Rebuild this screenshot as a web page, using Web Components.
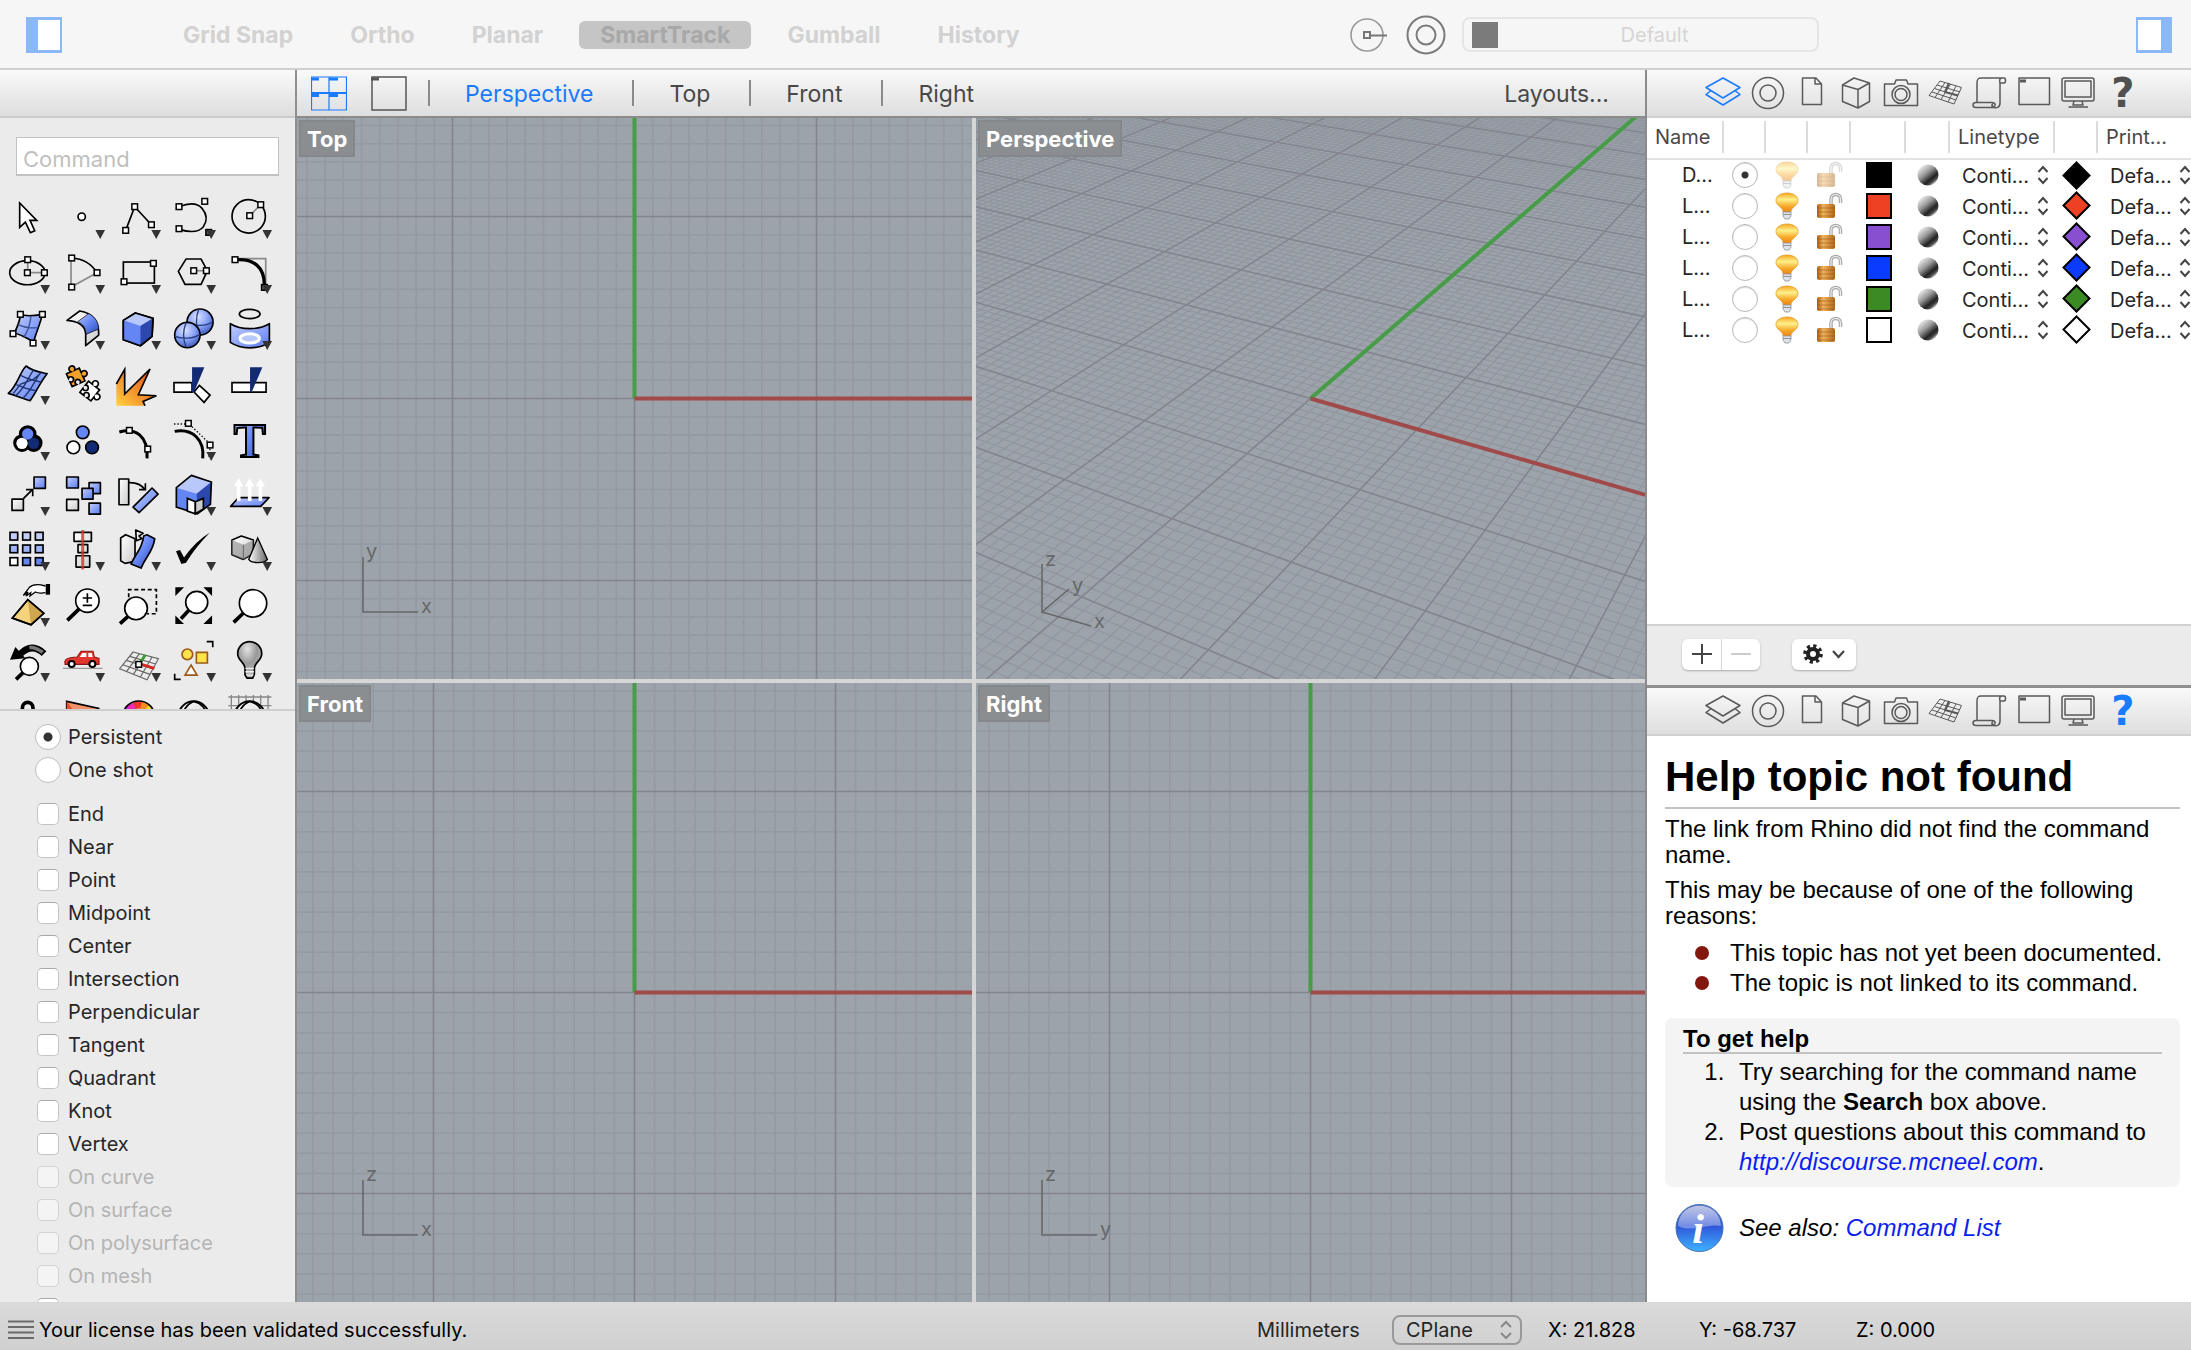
<!DOCTYPE html>
<html lang="en">
<head>
<meta charset="utf-8">
<title>Rhino</title>
<style>
  html, body { margin: 0; height: 100%; }
  body { font-family: Inter, "Liberation Sans", sans-serif; font-size: 20px; line-height: 24px; color: #262626; overflow: hidden; }
</style>
</head>
<body>
<app-shell>
  <mode-bar slot="top"></mode-bar>
  <side-bar slot="left">
    <tool-palette slot="tools"></tool-palette>
    <osnap-panel slot="snaps"></osnap-panel>
  </side-bar>
  <view-tabs slot="tabs"></view-tabs>
  <view-grid slot="views">
    <view-port label="Top" kind="ortho" unit="182" h="x" v="y"></view-port>
    <view-port label="Perspective" kind="perspective"></view-port>
    <view-port label="Front" kind="ortho" unit="201" h="x" v="z"></view-port>
    <view-port label="Right" kind="ortho" unit="201" h="y" v="z"></view-port>
  </view-grid>
  <panel-frame slot="right">
    <panel-tabs active="layers"></panel-tabs>
    <layers-panel></layers-panel>
    <panel-tabs active="help"></panel-tabs>
    <help-panel></help-panel>
  </panel-frame>
  <status-bar slot="bottom"></status-bar>
</app-shell>

<script>
const BASE = `<style>
  :host, *, *::before, *::after { box-sizing: border-box; }
  button { font: inherit; color: inherit; background: none; border: 0; padding: 0; margin: 0; }
  input, select { font: inherit; color: inherit; margin: 0; }
  svg { display: block; }
</style>`;
function define(name, render) {
  customElements.define(name, class extends HTMLElement {
    connectedCallback() {
      if (this.shadowRoot) return;
      this.attachShadow({ mode: 'open' }).innerHTML = BASE + render(this);
    }
  });
}

/* ---------- window frame ---------- */
define('app-shell', () => `<style>
  :host { display: grid; height: 100vh; grid-template-rows: 70px minmax(0, 1fr) 48px; background: #ebebeb; }
  .main { display: grid; grid-template-columns: 297px minmax(0, 1fr) 546px; min-height: 0; }
  .left { border-right: 2px solid #8f8f8f; min-height: 0; }
  .left, .right, .centre { display: flex; flex-direction: column; min-height: 0; }
  .right { border-left: 2px solid #8b8b8b; }
</style>
<slot name="top"></slot>
<div class="main">
  <div class="left"><slot name="left"></slot></div>
  <div class="centre"><slot name="tabs"></slot><slot name="views"></slot></div>
  <div class="right"><slot name="right"></slot></div>
</div>
<slot name="bottom"></slot>`);

define('mode-bar', () => `<style>
  :host { display: flex; align-items: center; background: #f6f6f6; border-bottom: 2px solid #cfcfcf; padding: 1px 19px 0 26px; }
  nav { display: flex; gap: 15px; margin-left: 100px; }
  nav button { font-size: 23px; line-height: 28px; font-weight: 700; color: #d2d2d2; padding: 0 21px; border-radius: 6px; }
  nav button.on { background: #c5c5c5; color: #a8a8a8; }
  .spacer { flex: 1; }
  .rings { display: flex; align-items: center; gap: 18px; }
  .layer { display: flex; align-items: center; width: 357px; height: 35px; border: 2px solid #e5e5e5; border-radius: 8px; margin: 0 317px 0 16px; padding: 0 8px; color: #d5d5d5; font-size: 20px; }
  .layer i { width: 26px; height: 26px; background: #7b7b7b; }
  .layer span { flex: 1; text-align: center; padding-left: 2px; }
</style>
<button aria-label="Left sidebar"><svg width="36" height="36"><path d="M1 1h34v34H1z" fill="#fff" stroke="#8bb8f9" stroke-width="2"/><path d="M0 0h12v36H0z" fill="#8bb8f9"/><path d="M0 1.500h36M0 34.500h36" stroke="#8bb8f9" stroke-width="3"/></svg></button>
<nav>${['Grid Snap','Ortho','Planar','SmartTrack','Gumball','History'].map(t => `<button${t === 'SmartTrack' ? ' class="on"' : ''}>${t}</button>`).join('')}</nav>
<span class="spacer"></span>
<span class="rings">
  <button aria-label="Record history"><svg width="38" height="38" fill="none"><circle cx="17" cy="19" r="16" stroke="#999" stroke-width="1.600"/><path d="M20 19.500h17M14 16h6v6h-6z" stroke="#777" stroke-width="2"/></svg></button>
  <button aria-label="Object properties"><svg width="40" height="40" fill="none" stroke="#7b7b7b" stroke-width="2"><circle cx="20" cy="20" r="18.500"/><circle cx="20" cy="20" r="9.500"/></svg></button>
</span>
<button class="layer"><i></i><span>Default</span></button>
<button aria-label="Right sidebar"><svg width="36" height="36"><path d="M1 1h34v34H1z" fill="#fff" stroke="#8bb8f9" stroke-width="2"/><path d="M25 0h11v36H25z" fill="#8bb8f9"/><path d="M0 1.500h36M0 34.500h36" stroke="#8bb8f9" stroke-width="3"/></svg></button>`);

define('side-bar', () => `<style>
  :host { display: flex; flex-direction: column; flex: 1; min-height: 0; }
  .head { flex: none; height: 48px; background: linear-gradient(#f9f9f9, #dedede); border-bottom: 2px solid #cbcbcb; }
  .cmd { flex: none; padding: 19px 16px 14px; }
  input { display: block; width: 100%; height: 39px; border: 1px solid #c2c2c2; border-bottom-width: 2px; background: #fff; padding: 5px 6px 0; font-size: 22px; outline: 0; }
  input::placeholder { color: #bfbfbf; opacity: 1; }
</style>
<div class="head"></div>
<div class="cmd"><input placeholder="Command" aria-label="Command"></div>
<slot name="tools"></slot><slot name="snaps"></slot>`);

/* ---------- tool palette: every icon is drawn on a 166 x 166 cell ---------- */
const sq = (x, y, dark) => `<rect x="${x-8.5}" y="${y-8.5}" width="17" height="17" fill="${dark ? '#555' : '#fff'}" stroke="#000" stroke-width="4.500"/>`;
const K = 'fill="none" stroke="#000" stroke-width="5"';
const B = 'fill="url(#b)" stroke="#000" stroke-width="5" stroke-linejoin="round"';
const W = 'fill="url(#w)" stroke="#000" stroke-width="5" stroke-linejoin="round"';
const G = 'fill="none" stroke="#8a8a8a" stroke-width="5"';
const glass = (x, y, r, hx, hy) => `<path d="M${x-r*.7} ${y+r*.7}L${hx} ${hy}" stroke="#000" stroke-width="11"/><circle cx="${x}" cy="${y}" r="${r}" fill="#fff" stroke="#000" stroke-width="5"/>`;
const globe = `<circle cx="83" cy="83" r="46" fill="url(#w)" stroke="#000" stroke-width="6"/><path d="M83 37c-30 14-40 40-38 90M83 37c24 6 38 20 42 60" ${K}/>`;
const piece = 'M-21-21H-6A9 9 0 1 1 6-21H21V-6A9 9 0 1 1 21 6V21H6A8 8 0 1 0-6 21H-21V6A8 8 0 1 0-21-6Z';
const TOOLS = [
  ['Select', '<path d="M59 39V112L76 96L91 128L104 122L90 91H110Z" fill="#fff" stroke="#000" stroke-width="5"/>', 1],
  ['Point', `<circle cx="80" cy="80" r="11" fill="#fff" stroke="#000" stroke-width="5"/>`],
  ['Polyline', `<path d="M44 121L71 50L121 104" ${K}/>` + sq(71,50)+sq(44,121)+sq(121,104)],
  ['Curve', `<path d="M39 50C70 38 95 40 108 55C124 74 124 92 112 110C98 128 66 126 39 118" ${K}/>` + sq(39,50)+sq(116,34)+sq(39,116)+sq(128,127,1)],
  ['Circle', `<circle cx="80" cy="79" r="50" ${K}/><path d="M83 77L116 44" ${G}/>` + sq(83,77)+sq(116,44)],
  ['Ellipse', `<ellipse cx="82" cy="83" rx="53" ry="36" ${K}/><path d="M83 44V83H133" ${G}/>` + sq(83,44)+sq(82,83)+sq(133,83)],
  ['Arc', `<path d="M48 39V126L126 83" ${G}/><path d="M50 39C85 41 110 58 126 83" ${K}/>` + sq(50,39)+sq(50,126)+sq(126,83)],
  ['Rectangle', `<rect x="37" y="51" width="93" height="63" ${K}/>` + sq(127,55)+sq(39,110)],
  ['Polygon', `<path d="M37 79L60 42H105L124 77L105 118H57Z" ${K}/><path d="M83 77H121" ${G}/>` + sq(83,77)+sq(121,77)],
  ['Fillet', `<path d="M39 41H131V127" ${G}/><path d="M46 44C95 42 127 66 127 120" fill="none" stroke="#000" stroke-width="10"/>` + sq(39,44)+sq(127,127,1)],
  ['Surface', `<path d="M61 40C80 48 105 44 127 40C120 70 106 100 101 122C80 112 66 102 43 96C52 78 60 60 61 40Z" ${B}/><path d="M93 45C90 70 84 90 72 108M54 70C72 80 92 82 114 80" stroke="#35508f" stroke-width="4" fill="none"/>` + sq(61,40)+sq(127,40)+sq(39,98)+sq(99,126)],
  ['Loft', `<path d="M36 58L74 30C112 36 132 58 131 102L92 134V98C90 74 68 60 36 58Z" ${W}/><path d="M68 62L101 38C122 48 131 66 131 84L93 100C92 80 84 68 68 62Z" fill="url(#d)" stroke="#000" stroke-width="2"/>`],
  ['Box', `<path d="M73 36L126 52L123 106L88 134L37 116V58Z" ${B}/><path d="M73 36L126 52L88 75L37 58Z" fill="#b9c8fa"/><path d="M37 58L88 75V134L37 116Z" fill="#6485f4"/><path d="M88 75L126 52L123 106L88 134Z" fill="#2c48ae"/><path d="M73 36L126 52L123 106L88 134L37 116V58Z" ${K}/>`],
  ['Boolean', `<circle cx="102" cy="63" r="39" fill="url(#s)" stroke="#000" stroke-width="5"/><path d="M64 68C85 76 120 76 140 62M98 25C88 50 90 80 98 100" fill="none" stroke="#27407f" stroke-width="4"/><circle cx="64" cy="102" r="38" fill="url(#s)" stroke="#000" stroke-width="5"/><path d="M27 106C48 114 82 114 101 100M60 65C50 90 52 118 60 138" fill="none" stroke="#27407f" stroke-width="4"/>`],
  ['Project', `<ellipse cx="83" cy="39" rx="31" ry="14" ${K}/><path d="M25 68C58 88 108 88 142 68V124C108 146 58 146 25 124Z" ${B}/><ellipse cx="83" cy="112" rx="29" ry="14" fill="#b9c8fa" stroke="#fff" stroke-width="9"/>`],
  ['Mesh', `<path d="M78 30C98 46 118 48 141 53C118 82 108 110 90 134C66 126 50 120 25 112C54 86 56 54 78 30Z" ${B}/><path d="M100 42C78 76 72 100 46 119M121 50C98 84 92 106 68 127M62 58C84 70 102 74 124 78M49 86C70 96 86 100 107 104M40 112L62 84L100 70L122 52" stroke="#1e3370" stroke-width="4" fill="none"/>`],
  ['Group', `<g stroke="#000" stroke-width="5"><path d="${piece}" fill="#f4a12c" transform="translate(62 64) rotate(-24)"/><path d="${piece}" fill="#fff" transform="translate(104 105) rotate(38)"/></g>`, 1],
  ['Explode', `<path d="M16 149V84L41 40V114L117 39L82 116L136 119L96 136L102 149Z" fill="url(#e)"/><path d="M16 84L41 40V114L117 39L82 116L136 119L96 136L102 149" ${K}/>`, 1],
  ['Trim', `<path d="M24 80H78V108H24Z" fill="#fff" stroke="#000" stroke-width="5"/><path d="M100 88L132 117L114 139L84 108Z" fill="#fff" stroke="#000" stroke-width="5"/><path d="M78 34H115L84 108H78Z" fill="#132b74"/>`, 1],
  ['Split', `<path d="M30 80H132V108H30Z" fill="#fff" stroke="#000" stroke-width="5"/><path d="M84 34H121L89 108H84Z" fill="#132b74"/>`, 1],
  ['Join', `<g stroke="#000" stroke-width="19"><circle cx="83" cy="66" r="17"/><circle cx="66" cy="93" r="17"/><circle cx="101" cy="93" r="17"/></g><circle cx="66" cy="94" r="17" fill="#fff"/><circle cx="101" cy="94" r="17" fill="#132b74"/><circle cx="83" cy="66" r="17" fill="#6485f4"/>`],
  ['Ungroup', `<g stroke="#000" stroke-width="5"><circle cx="83" cy="61" r="19" fill="#6485f4"/><circle cx="55" cy="106" r="19" fill="#fff"/><circle cx="111" cy="106" r="19" fill="#132b74"/></g>`, 1],
  ['Edit points', `<path d="M25 60C72 46 112 70 108 139" fill="none" stroke="#000" stroke-width="9"/>` + sq(55,55)+sq(110,111), 1],
  ['Control points', `<path d="M26 58C80 48 116 84 110 139" fill="none" stroke="#000" stroke-width="9"/><path d="M24 36H60M78 44L128 92M132 110L128 136" fill="none" stroke="#000" stroke-width="4" stroke-dasharray="4 6"/>` + sq(67,34)+sq(132,99)],
  ['Text', `<text x="83" y="134" text-anchor="middle" font-family="Liberation Serif, serif" font-weight="700" font-size="144" fill="url(#d)" stroke="#000" stroke-width="6">T</text>`, 1],
  ['Move', `<path d="M36 96H70V130H36Z" ${W}/><path d="M102 30H136V64H102Z" ${B}/><path d="M70 95L97 68M78 68H98V88" ${K}/>`],
  ['Copy', `<path d="M35 30H70V63H35Z" ${B}/><path d="M102 47H136V80H102Z" ${B}/><path d="M81 64H114V96H81Z" ${B}/><path d="M35 97H70V130H35Z" ${W}/><path d="M102 108H136V141H102Z" ${B}/>`, 1],
  ['Rotate', `<path d="M24 36H53V113H24Z" ${W}/><path d="M123 63L141 81L84 137L66 120Z" ${B}/><path d="M54 47C78 46 92 54 102 68M84 68H103V49" ${K}/>`, 1],
  ['Solid edit', `<path d="M76 25L136 45L133 112L94 140L31 120V62Z" fill="#6485f4"/><path d="M76 25L136 45L92 80L31 62Z" fill="#b9c8fa"/><path d="M92 80L136 45L133 112L94 140Z" fill="#2c48ae"/><path d="M76 25L136 45L133 112L94 140L31 120V62Z" ${K}/><path d="M64 94L88 104V140L64 132Z" fill="#fff" stroke="#000" stroke-width="5"/><path d="M88 104L112 94V126L88 140Z" fill="#ccc" stroke="#000" stroke-width="5"/>`],
  ['Extrude', `<path d="M49 92H141L116 118H26Z" ${B}/><path d="M50 102V50M83 102V50M115 102V50" stroke="#fff" stroke-width="11"/><path d="M36 58L50 34L64 58ZM69 58L83 34L97 58ZM101 58L115 34L129 58Z" fill="#fff"/>`],
  ['Array', [0,1,2].map(r => [0,1,2].map(c => `<rect x="${30+38*c}" y="${31+38*r}" width="23" height="23" fill="${r===2&&c===0?'#fff':['#c3cffb','#9fb3f8','#6485f4'][r]}" stroke="#000" stroke-width="5"/>`).join('')).join('')],
  ['Align', `<path d="M57 31H109V58H57ZM69 68H98V92H69ZM63 101H104V135H63Z" ${W}/><path d="M83 24V142" stroke="#d1352b" stroke-opacity=".8" stroke-width="9"/>`],
  ['Flow', `<path d="M74 24L96 34L84 42L92 50L76 56Z" ${W}/><path d="M29 48L44 38L72 50V118L42 124L29 116Z" ${W}/><path d="M98 42L108 38L131 50C126 90 106 100 90 138L60 126C76 90 92 84 98 42Z" fill="url(#d)" stroke="#000" stroke-width="5" stroke-linejoin="round"/>`],
  ['Check', '<path d="M30 88L42 84L54 106Q90 56 131 32Q86 78 60 122L46 126Z" fill="#000"/>'],
  ['Mesh solids', `<path d="M58 42L94 54L92 96L64 112L30 98V54Z" ${W}/><path d="M30 54L64 68L94 54L92 96L64 112L30 98Z" fill="#888" fill-opacity=".6"/><path d="M64 68V110" stroke="#666" stroke-width="3"/><path d="M107 48L136 112A29 13 0 0 1 80 112Z" fill="url(#c)" stroke="#000" stroke-width="4"/>`],
  ['Pick', `<path d="M83 65L37 120L93 140L131 106Z" fill="#f5d27c" stroke="#000" stroke-width="5"/><path d="M83 65L131 106L93 140Z" fill="#cfa64e"/><path d="M83 65L37 120L93 140L131 106Z" ${K}/><path d="M136 24C116 18 98 18 88 28L70 52L84 42L78 54L92 44L90 54L106 42C118 48 128 44 136 44" fill="#fff" stroke="#000" stroke-width="4"/><path d="M137 18H150V50H137Z" fill="#000"/>`],
  ['Zoom', glass(97,68,35,37,127) + `<path d="M97 46V74M83 60H111M83 82H111" ${K}/>`, 1],
  ['Zoom window', `<path d="M53 58V35H136V107H108" ${K} stroke-dasharray="12 8"/>` + glass(75,91,34,27,137), 1],
  ['Zoom extents', glass(92,73,33,45,122) + '<path d="M28 28H54L28 54ZM138 28V54L112 28ZM28 138V112L54 138ZM138 138H112L138 112Z" fill="#000"/>', 1],
  ['Zoom selected', glass(93,76,41,35,133), 1],
  ['Undo view', glass(88,100,27,48,139) + `<path d="M132 62C108 38 84 40 62 62" fill="none" stroke="#000" stroke-width="20"/><path d="M128 58C108 44 98 42 88 44" fill="none" stroke="#777" stroke-width="11"/><path d="M30 80L46 42L76 76Z" fill="#000"/>`],
  ['Car', `<path d="M24 106H142" stroke="#999" stroke-width="4"/><path d="M30 92C26 76 40 74 66 72L78 55H114L118 72L132 76V94H30Z" fill="#e2362f" stroke="#8b1712" stroke-width="3"/><path d="M82 60H94V72H74ZM100 60H110L113 72H100Z" fill="#fff"/><circle cx="50" cy="93" r="9" fill="#fff" stroke="#000" stroke-width="6"/><circle cx="112" cy="93" r="9" fill="#fff" stroke="#000" stroke-width="6"/>`],
  ['CPlane', `<path d="M66 57L142 77L108 140L26 107ZM85 62L47 115M104 67L67 124M123 72L88 132M56 70L134 93M46 82L126 108M36 95L117 124" fill="none" stroke="#666" stroke-width="3.500"/><path d="M86 92L102 66" stroke="#2fa32b" stroke-width="8"/><path d="M86 92L130 106" stroke="#d8241d" stroke-width="8"/>` + sq(83,94)],
  ['Selection', `<g stroke="#9c5a17" stroke-width="5"><circle cx="64" cy="64" r="16" fill="#ffe34d"/><path d="M91 58H124V90H91Z" fill="#ffe34d"/><path d="M75 96L93 126H57Z" fill="#fff"/></g><path d="M122 26H140V43M26 122V139H44" ${K}/>`],
  ['Hide', `<path d="M69 104C66 86 47 82 47 62A36 36 0 0 1 119 62C119 82 100 86 97 104V124L92 135H75L69 126Z" fill="url(#g)" stroke="#000" stroke-width="5"/><path d="M70 106H96M70 116H96M73 126H94" stroke="#eee" stroke-width="4"/>`],
  ['Lock', '<path d="M67 90V58C67 34 99 34 99 58V90" fill="none" stroke="#000" stroke-width="11"/>', 1],
  ['Layer', '<path d="M35 37L131 58V120H35Z" fill="#f2916a" stroke="#000" stroke-width="5"/><path d="M35 37L60 70H35Z" fill="#e5532a"/>', 1],
  ['Render colour', '<g fill="none" stroke-width="22"><path d="M47 80A36 36 0 0 1 58 58" stroke="#b52bea"/><path d="M56 60A36 36 0 0 1 72 49" stroke="#ee2bb8"/><path d="M70 50A36 36 0 0 1 92 49" stroke="#f0352c"/><path d="M90 48A36 36 0 0 1 108 60" stroke="#f58a20"/><path d="M106 58A36 36 0 0 1 119 82" stroke="#f7e02a"/></g><circle cx="83" cy="84" r="48" fill="none" stroke="#000" stroke-width="5"/>', 1],
  ['Shade', globe, 1],
  ['Wireframe', `<path d="M19 24H148M19 50H148M28 18V70M50 18V70M72 18V70M94 18V70M116 18V70M138 18V70" stroke="#888" stroke-width="4"/>` + globe, 1],
];
define('tool-palette', () => `<style>
  :host { display: block; flex: none; height: 521px; overflow: hidden; border-bottom: 2px solid #cfcfcf; }
  .grid { display: grid; width: 277px; grid-template-columns: repeat(5, 1fr); }
  button { aspect-ratio: 1; }
  .grid svg { width: 100%; height: 100%; overflow: visible; }
  .defs { position: absolute; width: 0; height: 0; }
</style>
<svg class="defs" aria-hidden="true"><defs>
  <linearGradient id="b" x2="1" y2="1"><stop offset="0" stop-color="#c3cffb"/><stop offset="1" stop-color="#5a7cf2"/></linearGradient>
  <linearGradient id="w" x2="1" y2="1"><stop offset="0" stop-color="#fff"/><stop offset="1" stop-color="#ccc"/></linearGradient>
  <linearGradient id="d" x2="1" y2="1"><stop offset="0" stop-color="#b9c8fa"/><stop offset=".5" stop-color="#6485f4"/><stop offset="1" stop-color="#2c48ae"/></linearGradient>
  <linearGradient id="e" x1="0" y1="1" x2="1" y2="0"><stop offset="0" stop-color="#ffd23c"/><stop offset="1" stop-color="#e2401b"/></linearGradient>
  <linearGradient id="c"><stop offset="0" stop-color="#fff"/><stop offset="1" stop-color="#666"/></linearGradient>
  <radialGradient id="s" cx=".4" cy=".3" r=".8"><stop offset="0" stop-color="#dbe3fd"/><stop offset=".5" stop-color="#89a2f7"/><stop offset="1" stop-color="#2c48ae"/></radialGradient>
  <radialGradient id="g" cx=".4" cy=".2" r=".8"><stop offset="0" stop-color="#e4e4e4"/><stop offset=".5" stop-color="#999"/><stop offset="1" stop-color="#bbb"/></radialGradient>
</defs></svg>
<div class="grid">${TOOLS.map(([n, art, plain]) => `<button aria-label="${n}"><svg viewBox="0 0 166 166">${art}${plain ? '' : '<path d="M121 120H150L135.500 147Z" fill="#333"/>'}</svg></button>`).join('')}</div>`);

/* ---------- object snaps ---------- */
define('osnap-panel', () => {
  const snaps = ['End','Near','Point','Midpoint','Center','Intersection','Perpendicular','Tangent','Quadrant','Knot','Vertex'];
  const off = ['On curve','On surface','On polysurface','On mesh'];
  return `<style>
  :host { display: block; flex: 1; min-height: 0; overflow: hidden; padding: 9px 0 0 35px; }
  fieldset { border: 0; margin: 0 0 11px; padding: 0; }
  label { display: flex; align-items: center; height: 33px; gap: 7px; }
  input { appearance: none; flex: none; background: #fff; }
  input[type=radio] { width: 26px; height: 26px; border-radius: 50%; border: 1px solid #bdbdbd; }
  input[type=radio]:checked { background: radial-gradient(circle, #333 0 4px, #fff 5px); }
  input[type=checkbox] { width: 22px; height: 22px; margin: 0 2px; border-radius: 5px; border: 1px solid #c4c4c4; border-top-color: #aaa; }
  input:disabled { background: #f4f4f4; border-color: #d2d2d2; }
  .off { color: #b4b4b4; }
</style>
<fieldset>
<label><input type="radio" name="mode" checked>Persistent</label>
<label><input type="radio" name="mode">One shot</label>
</fieldset>
${snaps.map(s => `<label><input type="checkbox">${s}</label>`).join('')}
${off.map(s => `<label class="off"><input type="checkbox" disabled>${s}</label>`).join('')}
<label><input type="checkbox" aria-label="More snaps"></label>`;
});

/* ---------- viewport tabs ---------- */
define('view-tabs', () => `<style>
  :host { display: flex; flex: none; align-items: center; height: 48px; background: linear-gradient(#f9f9f9, #dedede); border-bottom: 2px solid #8b8b8b; padding-left: 14px; font-size: 23px; color: #484848; }
  .icons { display: flex; gap: 24px; margin-right: 21px; }
  .tab, .more { height: 26px; line-height: 28px; }
  .tab { border-left: 2px solid #8a8a8a; padding: 0 39px 0 35px; }
  .on { color: #1a7bff; }
  .more { margin-left: auto; padding-right: 36px; }
</style>
<span class="icons">
  <button aria-label="Four views"><svg width="36" height="35" fill="none" stroke="#1a7bff"><path d="M.5 1H35.500V34H.5ZM18 1V34" stroke-width="1.200"/><path d="M0 17H36" stroke-width="2"/><path d="M0 3H8M18 3H27M0 19.500H8M18 19.500H27" stroke-width="3"/></svg></button>
  <button aria-label="One view"><svg width="36" height="35" fill="none" stroke="#555"><path d="M1 1H35V34H1Z" stroke-width="1.500"/><path d="M0 3H8" stroke-width="3"/></svg></button>
</span>
<button class="tab on">Perspective</button><button class="tab">Top</button><button class="tab">Front</button><button class="tab">Right</button>
<button class="more">Layouts...</button>`);

define('view-grid', () => `<style>
  :host { display: grid; flex: 1; min-height: 0; gap: 4px; background: #d6d6d6; grid-template-columns: minmax(0, 675fr) minmax(0, 669fr); grid-template-rows: minmax(0, 561fr) minmax(0, 619fr); }
</style><slot></slot>`);

/* ---------- construction planes ---------- */
function orthoGrid(unit) {
  let minor = '', major = '';
  for (let i = -40; i <= 40; i++) {
    const p = i * unit / 10;
    const d = `M${p.toFixed(1)} -900V900M-900 ${p.toFixed(1)}H900`;
    if (i % 10) minor += d; else major += d;
  }
  return `<path d="${minor}" class="minor"/><path d="${major}" class="major"/><path d="M0 0V-900" class="gy"/><path d="M0 0H900" class="gx"/>`;
}
function perspectiveGrid() {
  const a = 101.93, b = 58.61, c = 29.33, d = -50.76, g = -0.04537, h = 0.0774;
  const pt = (u, v) => { const w = 1 + g*u + h*v; return `${((a*u + b*v)/w).toFixed(1)} ${((c*u + d*v)/w).toFixed(1)}`; };
  let minor = '', major = '';
  const add = (i, s) => { if (i % 10) minor += s; else major += s; };
  for (let i = -140; i <= 90; i++) {
    const u = i / 10, v0 = Math.max(-12, (0.2 - 1 - g*u) / h);
    add(i, `M${pt(u, v0)}L${pt(u, 30)}`);
  }
  for (let i = -70; i <= 140; i++) {
    const v = i / 10, u1 = Math.min(14, (0.2 - 1 - h*v) / g);
    add(i, `M${pt(-30, v)}L${pt(u1, v)}`);
  }
  return `<path d="${minor}" class="minor fine"/><path d="${major}" class="major"/><path d="M0 0L${pt(0, 14)}" class="gy"/><path d="M0 0L${pt(8, 0)}" class="gx"/>`;
}
define('view-port', el => {
  const persp = el.getAttribute('kind') === 'perspective';
  const axes = persp
    ? `<path d="M66 -115V-67L93 -90M66 -67L115 -53"/><text x="69" y="-113">z</text><text x="96" y="-87">y</text><text x="118" y="-51">x</text>`
    : `<path d="M66 -122V-67H121"/><text x="69" y="-121">${el.getAttribute('v')}</text><text x="124" y="-66">${el.getAttribute('h')}</text>`;
  return `<style>
  :host { display: grid; background: #9da3ab; overflow: hidden; }
  svg, .label { grid-area: 1 / 1; }
  svg { width: 100%; height: 100%; min-height: 0; }
  path { fill: none; }
  .minor { stroke: #949aa1; stroke-width: 1.600; }
  .fine { stroke-width: 1.200; stroke: #90969e; }
  .major { stroke: #82858e; stroke-width: 1.600; }
  .gx { stroke: #a04a4a; stroke-width: 4; }
  .gy { stroke: #479c47; stroke-width: 4; }
  .axes path { stroke: #666869; stroke-width: 1.600; }
  .axes text { fill: #66686a; font-size: 20px; }
  .label { justify-self: start; align-self: start; z-index: 1; margin: 2px; height: 37px; line-height: 33px; padding: 1px 6px 0; border: 2px solid #85888a; background: #8b8e91; color: #fff; font-weight: 700; font-size: 22px; }
</style>
<svg><svg x="50%" y="50%" overflow="visible">${persp ? perspectiveGrid() : orthoGrid(+el.getAttribute('unit'))}</svg><svg y="100%" overflow="visible" class="axes">${axes}</svg></svg>
<button class="label">${el.getAttribute('label')}</button>`;
});

/* ---------- right-hand panels ---------- */
define('panel-frame', () => `<style>
  :host { display: flex; flex-direction: column; flex: 1; min-height: 0; background: #fff; }
</style><slot></slot>`);

const PANELS = {
  layers: '<path d="M22 8L39 17.500L22 28L5 17.500ZM9.500 21L5 24.500L22 35L39 24.500L34.500 21"/>',
  properties: '<circle cx="22" cy="23" r="15.500"/><circle cx="22" cy="23" r="8"/>',
  page: '<path d="M12.500 8H26L31.500 14V34.500H12.500ZM25 8V14H31.500"/>',
  box: '<path d="M20 8L35.500 13V31.500L24 38L8.500 31.500V15ZM8.500 15L24 19.500L35.500 13M24 19.500V38"/>',
  camera: '<path d="M5.500 14H15.500L17 10H27.500L29 14H38.500V35.500H5.500Z"/><circle cx="22" cy="24.500" r="9"/><circle cx="22" cy="24.500" r="6"/>',
  cplane: '<path stroke-width="1" d="M17 11L38.500 17.500L31 34L6 25.500ZM22 12.500L12 27.500M27.500 14L18 29.500M33 16L25 32M14 15L37 22M11.500 18.500L35 26M9 22L33 30"/><path d="M26 13L22 22L35 25.500" stroke-width="2"/>',
  notes: '<path d="M9 32V13C9 9 10 8 13 8H36C38 8 38 13 36 13H32V33C32 38 28 38 26 37.500H8C4 37.500 4 32.500 8 32.500H24C28 32.500 28 37 25 36.500C23 36 24 34 25 34M32 13C31 10 32 8 34 8"/>',
  display: '<path d="M7 8H37.500V34.500H7Z"/><path d="M8 11H14" stroke-width="3"/>',
  monitor: '<rect x="6" y="8" width="32" height="23" rx="2"/><path d="M9 11H35V27H9ZM18 31L17 35H27L26 31M12.500 37H32"/>',
};
define('panel-tabs', el => {
  const on = el.getAttribute('active');
  return `<style>
  :host { display: flex; flex: none; height: 48px; background: linear-gradient(#f9f9f9, #dedede); border-bottom: 2px solid #d0d0d0; padding: 0 46px 0 54px; }
  button { flex: 1; min-width: 0; color: #5a5a5a; }
  .on { color: #1a7bff; }
  svg { margin: 0 auto; fill: none; stroke: currentColor; stroke-width: 1.500; stroke-linejoin: round; }
  .q { font-family: "DejaVu Sans", sans-serif; font-weight: 700; font-size: 40px; line-height: 46px; color: #505050; }
  .q.on { color: #1a7bff; }
</style>${Object.entries(PANELS).map(([n, a]) => `<button aria-label="${n}"${n === on ? ' class="on"' : ''}><svg width="44" height="46" viewBox="0 0 44 46">${a}</svg></button>`).join('')}<button class="q${on === 'help' ? ' on' : ''}">?</button>`;
});

define('layers-panel', () => {
  const rows = [['D...','#000'],['L...','#ee4023'],['L...','#8850d0'],['L...','#0a3cff'],['L...','#3c8a24'],['L...','#fff']];
  return `<style>
  :host { display: flex; flex-direction: column; flex: none; height: 570px; border-bottom: 3px solid #8f8f8f; }
  .list { flex: 1; }
  table { table-layout: fixed; width: 100%; border-collapse: collapse; }
  th { height: 41px; font-weight: 400; text-align: left; padding: 0 8px 2px; color: #484848; white-space: nowrap; border-bottom: 2px solid #e2e2e2; background: linear-gradient(#dcdcdc, #dcdcdc) right 3px/2px 32px no-repeat; }
  th:last-child { background: none; }
  td { height: 31px; padding: 0; text-align: center; overflow: hidden; }
  td svg { margin: 0 auto; }
  .name { text-align: left; padding-left: 35px; }
  input { appearance: none; display: block; width: 26px; height: 26px; margin: 0 auto; border: 1px solid #b8b8b8; border-radius: 50%; box-shadow: inset 0 1px 1px #ddd; }
  input:checked { background: radial-gradient(circle, #333 0 3px, #fff 4px); }
  select { appearance: none; display: block; width: 100%; border: 0; outline: 0; padding: 2px 0 0 12px; height: 28px; background: url("data:image/svg+xml,%3Csvg xmlns='http://www.w3.org/2000/svg' width='12' height='20' fill='none' stroke='%23444' stroke-width='2'%3E%3Cpath d='M1.500 7L6 2L10.500 7M1.500 13L6 18L10.500 13'/%3E%3C/svg%3E") right 6px center no-repeat; }
  .last select { background-position: right 0 center; }
  .swatch { display: block; width: 26px; height: 26px; border: 2px solid #000; margin: 0 auto; }
  .dim { opacity: .45; }
  footer { display: flex; align-items: center; gap: 32px; height: 61px; background: #ebebeb; border-top: 2px solid #d2d2d2; padding: 0 35px 3px; }
  .grp { display: flex; height: 31px; background: #fff; border-radius: 6px; box-shadow: 0 1px 2px #aaa; }
  .grp button { width: 39px; display: grid; place-items: center; }
  .grp button + button { border-left: 1px solid #d8d8d8; }
  .grp .gear { width: 64px; }
</style>
<svg width="0" height="0" style="position:absolute" aria-hidden="true"><defs>
  <linearGradient id="bulb" x2="0" y2="1"><stop offset="0" stop-color="#f6a820"/><stop offset=".35" stop-color="#fdf08a"/><stop offset=".7" stop-color="#f8a929"/><stop offset="1" stop-color="#e98316"/></linearGradient>
  <linearGradient id="lock"><stop offset="0" stop-color="#a65f18"/><stop offset=".35" stop-color="#f0b25c"/><stop offset="1" stop-color="#b0661a"/></linearGradient>
  <linearGradient id="ball" x1=".1" y1=".1" x2=".8" y2=".95"><stop offset="0" stop-color="#f4f4f4"/><stop offset=".4" stop-color="#999"/><stop offset=".72" stop-color="#222"/><stop offset=".85" stop-color="#444"/><stop offset="1" stop-color="#eee"/></linearGradient>
</defs></svg>
<div class="list"><table>
<colgroup>${[77,42,42,43,55,44,105,43,93].map(w => `<col style="width:${w}px">`).join('')}</colgroup>
<thead><tr><th>Name</th><th></th><th></th><th></th><th></th><th></th><th>Linetype</th><th></th><th>Print...</th></tr></thead>
<tbody>${rows.map(([n, c], i) => `<tr>
<td class="name">${n}</td>
<td><input type="radio" name="current" aria-label="Current layer"${i ? '' : ' checked'}></td>
<td><svg width="24" height="28"${i ? '' : ' class="dim"'}><path d="M8 20C8 15 1 14 1 8.500C1 -1.500 23 -1.500 23 8.500C23 14 16 15 16 20Z" fill="url(#bulb)" stroke="#e59a2a" stroke-width=".8"/><path d="M8 20H16V24L14 27H10L8 24Z" fill="#dfe3e8" stroke="#8c939b" stroke-width=".8"/><path d="M8 22.500H16" stroke="#8c939b"/></svg></td>
<td><svg width="27" height="28"${i ? '' : ' class="dim"'}><path d="M15 13V7C15 1 24.500 1 24.500 7V11" fill="none" stroke="#a9a9a9" stroke-width="3.500"/><path d="M15 13V7C15 1 24.500 1 24.500 7V11" fill="none" stroke="#eee" stroke-width="1.200"/><rect x="1" y="12" width="18" height="14" rx="2" fill="url(#lock)"/><path d="M1 16H19M1 20H19M1 24H19" stroke="#8f4f10" stroke-opacity=".5"/></svg></td>
<td><i class="swatch" style="background:${c}"></i></td>
<td><svg width="22" height="22"><circle cx="11" cy="11" r="10.500" fill="url(#ball)"/></svg></td>
<td><select aria-label="Linetype"><option>Conti...</option></select></td>
<td><svg width="29" height="29"><path d="M14.500 1.500L27.500 14.500L14.500 27.500L1.500 14.500Z" fill="${c}" stroke="#000" stroke-width="2"/></svg></td>
<td class="last"><select aria-label="Print width"><option>Defa...</option></select></td>
</tr>`).join('')}</tbody></table></div>
<footer>
  <span class="grp"><button aria-label="Add layer"><svg width="22" height="22"><path d="M11 1V21M1 11H21" stroke="#444" stroke-width="2"/></svg></button><button aria-label="Remove layer"><svg width="22" height="22"><path d="M1 11H21" stroke="#ccc" stroke-width="2"/></svg></button></span>
  <span class="grp"><button class="gear" aria-label="Layer options"><svg width="42" height="20" fill="none"><circle cx="10" cy="10" r="5" stroke="#222" stroke-width="4"/><circle cx="10" cy="10" r="8" stroke="#222" stroke-width="3.600" stroke-dasharray="3.140 3.140"/><path d="M34 7L39.500 13L45 7" stroke="#444" stroke-width="2.200" transform="translate(-4)"/></svg></button></span>
</footer>`;
});

define('help-panel', () => `<style>
  :host { display: block; flex: 1; min-height: 0; padding: 17px 11px 0 18px; background: #fff; color: #000; font-family: "Liberation Sans", Arial, sans-serif; font-size: 24px; line-height: 26px; }
  h1 { font-size: 42px; line-height: 48px; margin: 0 0 7px; padding-bottom: 6px; border-bottom: 2px solid #c2c2c2; }
  p { margin: 0 0 9px; }
  ul { list-style: none; margin: 0; padding: 0 0 0 30px; line-height: 30px; }
  ul li { display: flex; align-items: center; gap: 21px; white-space: nowrap; }
  ul li::before { content: ""; width: 14px; height: 14px; border-radius: 50%; background: #82170f; }
  section { margin: 20px 0 0; padding: 8px 18px 10px; border-radius: 8px; background: #f4f4f4; }
  h2 { font-size: 24px; line-height: 26px; margin: 0 0 3px; border-bottom: 2px solid #c2c2c2; }
  ol { margin: 0; padding: 0 0 0 48px; line-height: 30px; white-space: nowrap; }
  ol li { padding-left: 8px; }
  a { color: #0a1fef; text-decoration: none; font-style: italic; }
  .see { display: flex; align-items: center; gap: 15px; margin: 16px 0 0 10px; font-style: italic; }
</style>
<h1>Help topic not found</h1>
<p>The link from Rhino did not find the command name.</p>
<p>This may be because of one of the following reasons:</p>
<ul><li>This topic has not yet been documented.</li><li>The topic is not linked to its command.</li></ul>
<section>
  <h2>To get help</h2>
  <ol><li>Try searching for the command name<br>using the <b>Search</b> box above.</li><li>Post questions about this command to<br><a href="#discourse">http://discourse.mcneel.com</a>.</li></ol>
</section>
<div class="see">
  <svg width="49" height="50"><defs><linearGradient id="i" x2="0" y2="1"><stop offset="0" stop-color="#5d6fc0"/><stop offset=".45" stop-color="#2f55d8"/><stop offset="1" stop-color="#3fb2ff"/></linearGradient><linearGradient id="j" x2="0" y2="1"><stop offset="0" stop-color="#fff" stop-opacity=".6"/><stop offset="1" stop-color="#fff" stop-opacity=".3"/></linearGradient></defs>
  <circle cx="24.500" cy="25" r="23.500" fill="url(#i)" stroke="#3a6fae"/><path d="M3 23C4 -4 45 -4 46 23C32 20 18 30 3 23Z" fill="url(#j)"/>
  <text x="23" y="40" text-anchor="middle" font-family="Liberation Serif, serif" font-style="italic" font-weight="700" font-size="42" fill="#fff">i</text></svg>
  <span>See also: <a href="#commands">Command List</a></span>
</div>`);

define('status-bar', () => `<style>
  :host { display: flex; align-items: center; background: linear-gradient(#dadada, #d0d0d0); padding: 7px 0 0 8px; color: #000; white-space: nowrap; }
  .menu { margin-right: 5px; }
  .msg { flex: 1; }
  .coords { display: flex; align-items: center; width: 934px; }
  .units { width: 135px; color: #262626; }
  select { appearance: none; width: 130px; height: 30px; margin-right: 26px; border: 2px solid #999; border-radius: 8px; padding: 0 0 0 12px; color: #262626; background: url("data:image/svg+xml,%3Csvg xmlns='http://www.w3.org/2000/svg' width='14' height='20' fill='none' stroke='%23888' stroke-width='2'%3E%3Cpath d='M2 7L7 2L12 7M2 13L7 18L12 13'/%3E%3C/svg%3E") right 7px center no-repeat; }
  .x { width: 151px; } .y { width: 157px; }
</style>
<button class="menu" aria-label="Menu"><svg width="26" height="20"><path d="M0 1.500H26M0 7H26M0 12.500H26M0 18H26" stroke="#6a6a6a" stroke-width="2"/></svg></button>
<span class="msg">Your license has been validated successfully.</span>
<span class="coords"><span class="units">Millimeters</span>
<select aria-label="Coordinate system"><option>CPlane</option></select>
<span class="x">X: 21.828</span><span class="y">Y: -68.737</span><span>Z: 0.000</span></span>`);
</script>
</body>
</html>
